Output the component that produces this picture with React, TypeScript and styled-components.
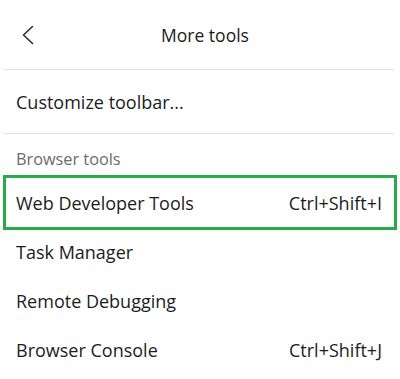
import React from 'react';
import styled, { createGlobalStyle } from 'styled-components';

const GlobalStyle = createGlobalStyle`
  html, body {
    margin: 0;
    padding: 0;
    background: #ffffff;
  }
  body {
    font-family: 'Open Sans', 'Noto Sans', sans-serif;
    color: #1c1c1c;
  }
`;

const Panel = styled.div`
  width: 400px;
  height: 379px;
  background: #ffffff;
  overflow: hidden;
`;

const Header = styled.div`
  height: 69px;
  display: flex;
  align-items: center;
`;

const BackButton = styled.button`
  width: 46px;
  height: 46px;
  margin-left: 5px;
  border: none;
  background: transparent;
  padding: 0;
  display: flex;
  align-items: center;
  justify-content: center;
  color: #2b2b2b;
`;

const Title = styled.h1`
  flex: 1;
  margin: 0 45px 0 0;
  padding-left: 4px;
  text-align: center;
  font-size: 17.5px;
  font-weight: 400;
  color: #1c1c1c;
`;

const Separator = styled.hr`
  border: none;
  height: 1px;
  background: #e2e2e2;
  margin: 0 6px 0 4px;
`;

const SimpleRow = styled.div<{ $height: number }>`
  height: ${p => p.$height}px;
  display: flex;
  align-items: center;
  padding-left: 16px;
  font-size: 18px;
`;

const SectionLabel = styled.div`
  height: 38px;
  padding-top: 6px;
  padding-left: 16px;
  display: flex;
  align-items: center;
  font-size: 16.3px;
  color: #6b6b6b;
`;

const Item = styled.div<{ $active?: boolean }>`
  height: 49px;
  margin: 0 6px;
  padding: 0 12px 0 10px;
  display: flex;
  align-items: center;
  justify-content: space-between;
  font-size: 18px;
  outline: ${p => (p.$active ? '3px solid #2aab4a' : 'none')};
`;

const Shortcut = styled.span`
  color: #1c1c1c;
`;

const ChevronLeft = () => (
  <svg width="14" height="20" viewBox="0 0 14 20" fill="none">
    <polyline
      points="11.5,1.5 2.5,10 11.5,18.5"
      stroke="currentColor"
      strokeWidth="1.6"
      strokeLinecap="round"
      strokeLinejoin="round"
    />
  </svg>
);

const items = [
  { label: 'Web Developer Tools', shortcut: 'Ctrl+Shift+I', active: true },
  { label: 'Task Manager' },
  { label: 'Remote Debugging' },
  { label: 'Browser Console', shortcut: 'Ctrl+Shift+J' },
];

export default function App() {
  return (
    <>
      <GlobalStyle />
      <Panel>
        <Header>
          <BackButton aria-label="Back">
            <ChevronLeft />
          </BackButton>
          <Title>More tools</Title>
        </Header>
        <Separator />
        <SimpleRow $height={63}>Customize toolbar...</SimpleRow>
        <Separator />
        <SectionLabel>Browser tools</SectionLabel>
        {items.map(item => (
          <Item key={item.label} $active={item.active}>
            <span>{item.label}</span>
            {item.shortcut && <Shortcut>{item.shortcut}</Shortcut>}
          </Item>
        ))}
      </Panel>
    </>
  );
}
